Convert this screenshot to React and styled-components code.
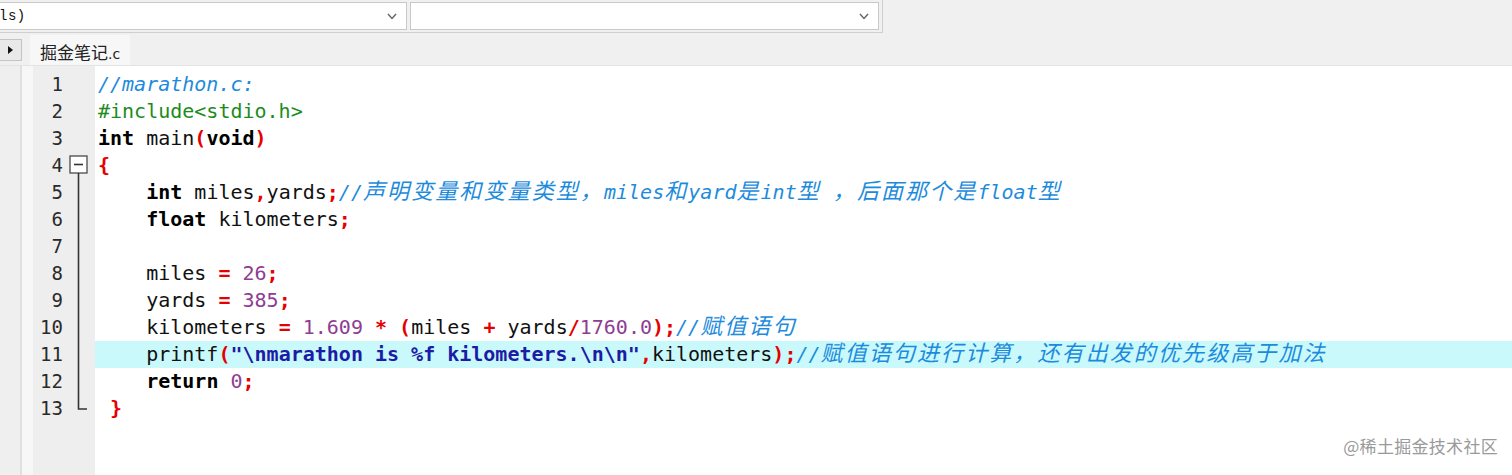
import React from "react";
import styled, { createGlobalStyle } from "styled-components";

const GlobalStyle = createGlobalStyle`
  html, body {
    margin: 0;
    padding: 0;
    background: #ffffff;
  }
  body {
    font-family: "DejaVu Sans", "Noto Sans CJK SC", sans-serif;
  }
`;

const colors = {
    chrome: "#f0f0f0",
    border: "#c9c9c9",
    gutter: "#eeeeee",
    highlight: "#c9f9fb",
    kw: "#000000",
    id: "#111111",
    op: "#e60000",
    num: "#8e3d93",
    str: "#1c1ca6",
    cmt: "#1d8bdc",
    pre: "#1c8c1c",
};

const Page = styled.div`
    position: relative;
    width: 1512px;
    height: 475px;
    display: flex;
    flex-direction: column;
    overflow: hidden;
    background: ${colors.chrome};
`;

const Toolbar = styled.div`
    height: 35px;
    flex: none;
    display: flex;
    align-items: flex-start;
    background: ${colors.chrome};
`;

const ComboFrame = styled.div`
    display: flex;
    gap: 3px;
    height: 33px;
    padding: 2px 3px 0 0;
    box-sizing: border-box;
    border-right: 1px solid #cfcfcf;
    border-bottom: 1px solid #cfcfcf;
    margin-left: -2px;
`;

const Combo = styled.div`
    width: ${(p) => p.$w}px;
    height: 28px;
    box-sizing: border-box;
    border: 1px solid ${colors.border};
    background: #ffffff;
    display: flex;
    align-items: center;
    justify-content: space-between;
    padding: 0 9px 0 0;
    font-family: "Liberation Mono", monospace;
    font-size: 14px;
    color: #111;
`;

const ComboText = styled.span`
    letter-spacing: 0.5px;
`;

const Chevron = () => (
    <svg width="10" height="7" viewBox="0 0 10 7">
        <polyline points="1,1 5,5.5 9,1" fill="none" stroke="#666" strokeWidth="1.4" />
    </svg>
);

const TabBar = styled.div`
    height: 31px;
    flex: none;
    display: flex;
    align-items: stretch;
    gap: 8px;
    background: ${colors.chrome};
    border-bottom: 1px solid #e3e3e3;
    box-sizing: border-box;
`;

const ScrollButton = styled.div`
    width: 22px;
    height: 22px;
    margin-top: 4px;
    box-sizing: border-box;
    border: 1px solid #c4c4c4;
    border-left: none;
    background: #e9e9e9;
    display: flex;
    align-items: center;
    justify-content: center;
`;

const Tab = styled.div`
    width: 100px;
    background: #f7f7f7;
    display: flex;
    align-items: baseline;
    padding: 4px 0 0 10px;
    box-sizing: border-box;
    font-family: "Noto Sans CJK SC", sans-serif;
    font-size: 17px;
    color: #222;
    small {
        font-family: "DejaVu Sans", sans-serif;
        font-size: 14px;
    }
`;

const Editor = styled.div`
    flex: 1;
    display: flex;
    background: #ffffff;
`;

const LeftStrip = styled.div`
    width: 20px;
    flex: none;
    background: #efefef;
    border-right: 2px solid #e0e0e0;
`;

const LightStrip = styled.div`
    width: 11px;
    flex: none;
    background: #f7f7f7;
`;

const Gutter = styled.div`
    width: 62px;
    flex: none;
    background: ${colors.gutter};
    padding-top: 5px;
`;

const GutterRow = styled.div`
    height: 27px;
    display: flex;
`;

const LineNo = styled.div`
    width: 30px;
    text-align: right;
    font-family: "DejaVu Sans Mono", monospace;
    font-size: 19px;
    line-height: 27px;
    color: #2a2a2a;
`;

const FoldCell = styled.div`
    width: 32px;
    height: 27px;
`;

const Code = styled.div`
    flex: 1;
    padding-top: 5px;
`;

const CodeLine = styled.div`
    height: 27px;
    line-height: 27px;
    padding-left: 3px;
    white-space: pre;
    font-family: "DejaVu Sans Mono", monospace;
    font-size: 20px;
    color: ${colors.id};
    background: ${(p) => (p.$active ? colors.highlight : "transparent")};
`;

const Tok = styled.span`
    color: ${(p) => colors[p.$k] || colors.id};
    font-weight: ${(p) => (p.$k === "kw" || p.$k === "op" || p.$k === "str" ? "bold" : "normal")};
    font-style: ${(p) => (p.$k === "cmt" ? "italic" : "normal")};
`;

const Cjk = styled.span`
    font-family: "Noto Sans CJK SC", sans-serif;
    font-size: 22px;
    line-height: 0;
    letter-spacing: 2.1px;
    font-weight: normal;
`;

const Watermark = styled.div`
    position: absolute;
    right: 14px;
    bottom: 17px;
    font-family: "Noto Sans CJK SC", sans-serif;
    font-size: 17px;
    color: #9a9a9a;
    letter-spacing: 0.3px;
`;

const FoldMark = ({ kind }) => (
    <svg width="32" height="27" viewBox="0 0 32 27">
        {kind === "start" && (
            <>
                <rect x="7" y="4" width="17" height="17" fill="#fff" stroke="#4a4a4a" strokeWidth="1.3" />
                <line x1="11" y1="12.5" x2="20" y2="12.5" stroke="#333" strokeWidth="1.6" />
                <line x1="15.5" y1="21" x2="15.5" y2="27" stroke="#333" strokeWidth="1.6" />
            </>
        )}
        {kind === "mid" && <line x1="15.5" y1="0" x2="15.5" y2="27" stroke="#333" strokeWidth="1.6" />}
        {kind === "end" && (
            <polyline points="15.5,0 15.5,14 24,14" fill="none" stroke="#333" strokeWidth="1.6" />
        )}
    </svg>
);

const lines = [
    [["cmt", "//marathon.c:"]],
    [["pre", "#include<stdio.h>"]],
    [["kw", "int"], ["id", " main"], ["op", "("], ["kw", "void"], ["op", ")"]],
    [["op", "{"]],
    [
        ["id", "    "], ["kw", "int"], ["id", " miles"], ["op", ","], ["id", "yards"], ["op", ";"],
        ["cmt", "//声明变量和变量类型，miles和yard是int型 ，后面那个是float型"],
    ],
    [["id", "    "], ["kw", "float"], ["id", " kilometers"], ["op", ";"]],
    [],
    [["id", "    miles "], ["op", "="], ["id", " "], ["num", "26"], ["op", ";"]],
    [["id", "    yards "], ["op", "="], ["id", " "], ["num", "385"], ["op", ";"]],
    [
        ["id", "    kilometers "], ["op", "="], ["id", " "], ["num", "1.609"], ["id", " "], ["op", "*"],
        ["id", " "], ["op", "("], ["id", "miles "], ["op", "+"], ["id", " yards"], ["op", "/"],
        ["num", "1760.0"], ["op", ")"], ["op", ";"], ["cmt", "//赋值语句"],
    ],
    [
        ["id", "    printf"], ["op", "("], ["str", "\"\\nmarathon is %f kilometers.\\n\\n\""], ["op", ","],
        ["id", "kilometers"], ["op", ")"], ["op", ";"], ["cmt", "//赋值语句进行计算，还有出发的优先级高于加法"],
    ],
    [["id", "    "], ["kw", "return"], ["id", " "], ["num", "0"], ["op", ";"]],
    [["id", " "], ["op", "}"]],
];

const foldKind = (i) => {
    if (i === 3) return "start";
    if (i > 3 && i < 12) return "mid";
    if (i === 12) return "end";
    return null;
};

// split comment text so the CJK runs get their own font and double-cell width
const renderText = (text) =>
    text.split(/([\u3000-\u9fff\uff00-\uffef]+)/).map((part, i) =>
        /[\u3000-\u9fff\uff00-\uffef]/.test(part) ? <Cjk key={i}>{part}</Cjk> : part
    );

const App = () => {
    return (
        <Page>
            <GlobalStyle />
            <Toolbar>
                <ComboFrame>
                    <Combo $w={409}>
                        <ComboText>ls)</ComboText>
                        <Chevron />
                    </Combo>
                    <Combo $w={469}>
                        <span />
                        <Chevron />
                    </Combo>
                </ComboFrame>
            </Toolbar>
            <TabBar>
                <ScrollButton>
                    <svg width="5" height="8" viewBox="0 0 5 8">
                        <polygon points="0,0 5,4 0,8" fill="#111" />
                    </svg>
                </ScrollButton>
                <Tab>
                    掘金笔记<small>.c</small>
                </Tab>
            </TabBar>
            <Editor>
                <LeftStrip />
                <LightStrip />
                <Gutter>
                    {lines.map((_, i) => (
                        <GutterRow key={i}>
                            <LineNo>{i + 1}</LineNo>
                            <FoldCell>{foldKind(i) && <FoldMark kind={foldKind(i)} />}</FoldCell>
                        </GutterRow>
                    ))}
                </Gutter>
                <Code>
                    {lines.map((toks, i) => (
                        <CodeLine key={i} $active={i === 10}>
                            {toks.map(([k, t], j) => (
                                <Tok key={j} $k={k}>
                                    {k === "cmt" ? renderText(t) : t}
                                </Tok>
                            ))}
                            {toks.length === 0 && " "}
                        </CodeLine>
                    ))}
                </Code>
            </Editor>
            <Watermark>@稀土掘金技术社区</Watermark>
        </Page>
    );
};

export default App;
